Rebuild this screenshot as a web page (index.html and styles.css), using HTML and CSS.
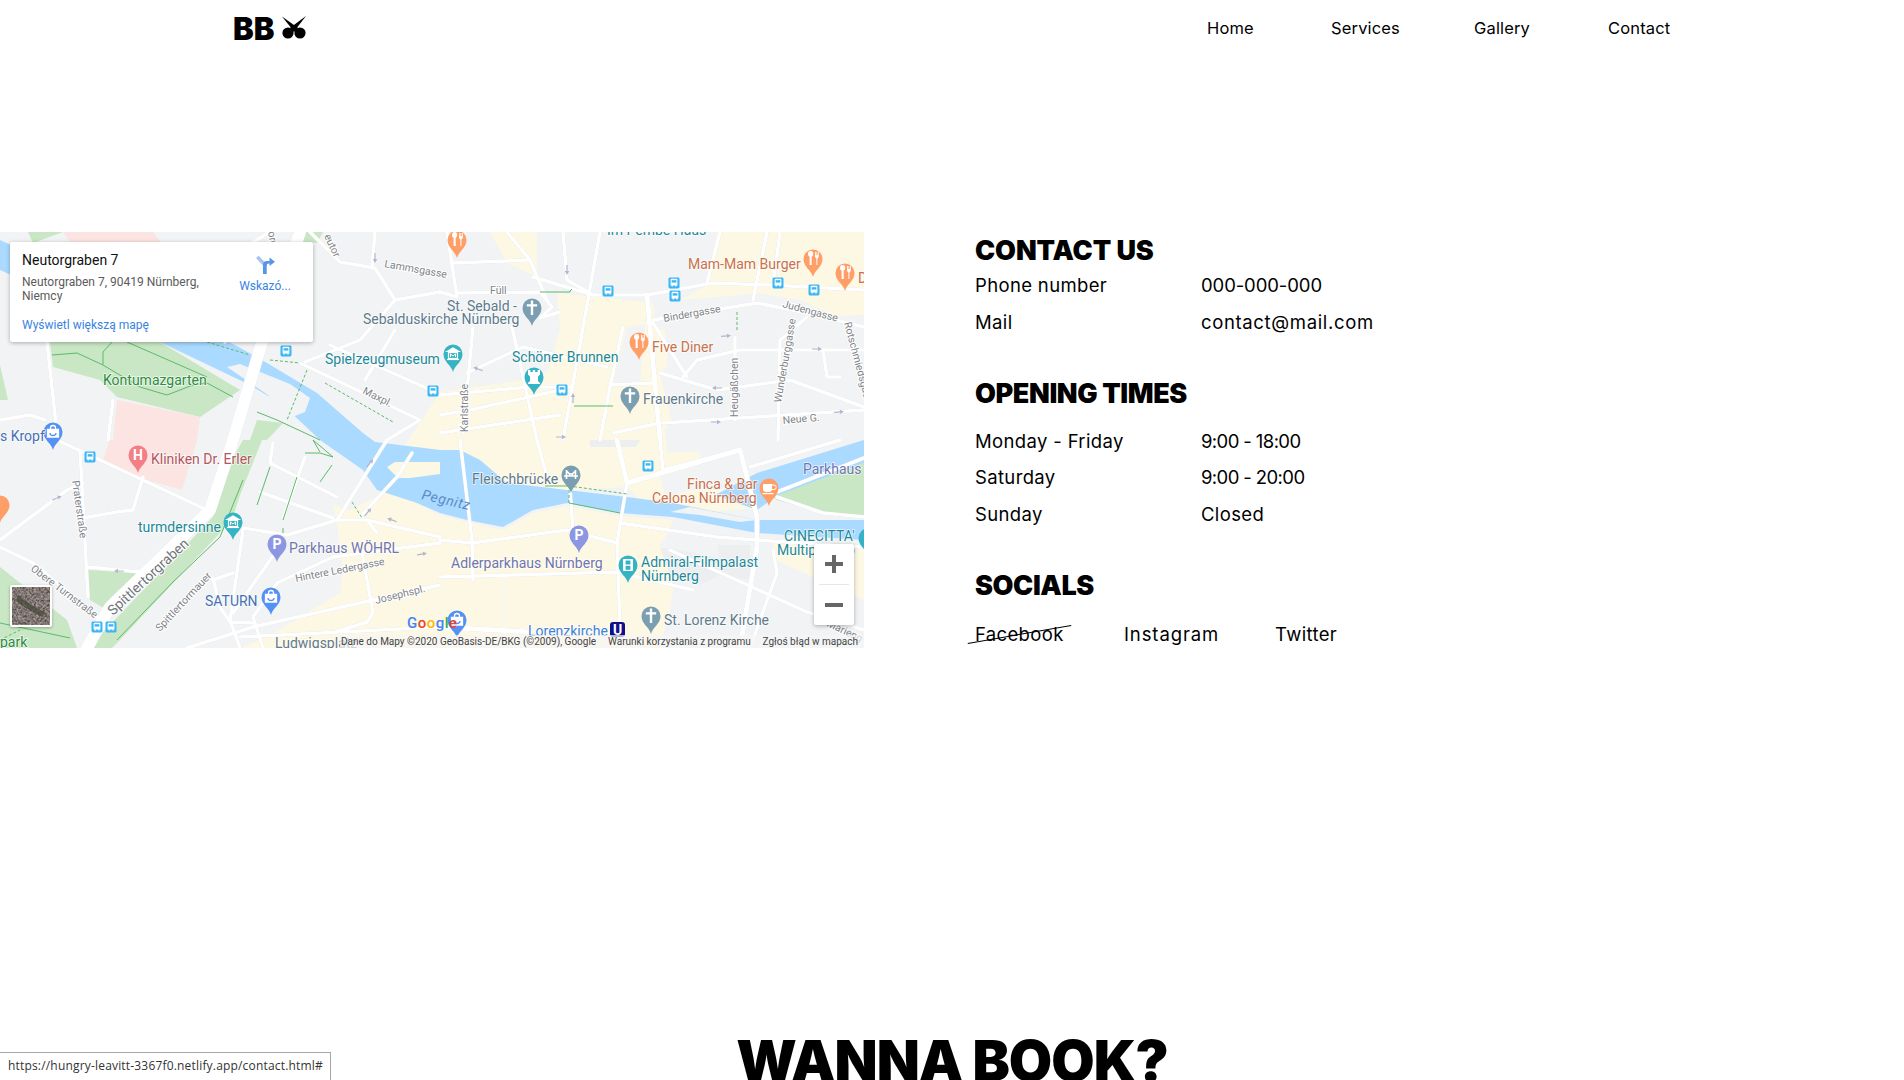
FILE: index.html
```html
<!DOCTYPE html>
<html lang="pl">
<head>
<meta charset="utf-8">
<title>Contact</title>
<link rel="stylesheet" href="styles.css">
</head>
<body>
<header class="topbar">
  <a class="logo" href="#">BB
    <svg class="logo-icon" viewBox="0 0 24 24"><path d="M0 .5 L15.5 11.5 L12 15.5 Z"/><path d="M24 0 L8.5 11.5 L12 15.5 Z"/><circle cx="6" cy="17" r="5.6"/><circle cx="18" cy="17" r="5.6"/><path d="M8 12 L12 9.5 L16 12 L12 16Z"/></svg>
  </a>
  <nav class="nav">
    <a href="#">Home</a><a href="#">Services</a><a href="#">Gallery</a><a href="#">Contact</a>
  </nav>
</header>

<main class="contact">
  <div class="map">
    <svg class="map-canvas" viewBox="0 232 864 416">
      <defs>
        <path id="pin" d="M0,18 C-1.8,11 -9.5,8 -9.5,0 A9.5,9.5 0 1 1 9.5,0 C9.5,8 1.8,11 0,18Z"/>
        <g id="g-food" fill="#fff"><path d="M-5,-5 a2.6,3 0 1 1 5.2,0 a2.6,3 0 0 1 -1.6,2.8 L-1.2,6 h-2.2 L-3.4,-2.2 a2.6,3 0 0 1 -1.6,-2.8Z"/><path d="M2,-7 h.8 v3 h.7 v-3 h.8 v3 h.7 v-3 h.8 v5 l-1.4,1.4 V6 H3.4 V-.6 L2,-2Z"/></g>
        <g id="g-cross" fill="#fff"><path d="M-1.2,-7.5 h2.4 v3.7 h4 v2.2 h-4 V7 h-2.4 V-1.6 h-4 v-2.2 h4Z"/></g>
        <g id="g-museum" fill="none" stroke="#fff" stroke-width="1.2"><path d="M-6,-2.5 L0,-6 L6,-2.5Z" fill="#fff"/><rect x="-4.5" y="-1.5" width="9" height="6"/><path d="M-2.5,3 V0 L0,2 L2.5,0 V3" stroke-width="1"/><path d="M-6,5.5 H6"/></g>
        <g id="g-shop" fill="none" stroke="#fff" stroke-width="1.3"><path d="M-5.5,-2.5 H5.5 V5 H-5.5Z" fill="#fff"/><path d="M-2.5,-2.5 V-4 a2.5,2.5 0 0 1 5,0 V-2.5"/><path d="M-3,1 a3,2.5 0 0 0 6,0" stroke="#5491f5"/></g>
        <g id="g-castle" fill="#fff"><path d="M-6,-7 h2.4 v2 h2.4 v-2 h2.4 v2 h2.4 v-2 H6 v4.4 l-2,2 V4 l2,2 v1 h-12 v-1 l2,-2 V-.6 l-2,-2Z"/></g>
        <g id="g-cafe" fill="#fff"><path d="M-6,-4 h9 v5 a3,3 0 0 1 -3,3 h-3 a3,3 0 0 1 -3,-3Z"/><path d="M3,-3 h2 a2,2 0 0 1 0,4.5 h-2" fill="none" stroke="#fff"/><rect x="-6.5" y="5" width="11" height="1.2"/></g>
        <g id="g-film" fill="#fff"><rect x="-5" y="-6" width="10" height="12" rx=".8"/><rect x="-2.4" y="-4.5" width="4.8" height="4" fill="#34b3c5"/><rect x="-2.4" y=".8" width="4.8" height="4" fill="#34b3c5"/></g>
        <g id="g-bridge" fill="none" stroke="#fff" stroke-width="1.6"><path d="M-7,1 H7 M-4.5,-5 V4 M4.5,-5 V4 M-4.5,-4 Q0,2 4.5,-4 M-1.5,-1 V1 M1.5,-1 V1"/></g>
        <g id="bus"><rect x="-5.5" y="-5.5" width="11" height="11" rx="1.4" fill="#3bb6f6"/><path d="M-3.4,-3.2 a1,1 0 0 1 1,-1 h4.8 a1,1 0 0 1 1,1 v5.6 h-.8 v1 h-1.2 v-1 h-2.6 v1 h-1.2 v-1 h-1Z" fill="#fff"/><rect x="-2.4" y="-2.8" width="4.8" height="2.4" fill="#3bb6f6"/></g>
        <path id="arrow" d="M-5,-.6 H1 V-2.2 L5,0 L1,2.2 V.6 H-5Z" fill="#b1b7ce"/>
      </defs>

      <rect class="land" x="0" y="232" width="864" height="416"/>

      <g class="cream">
        <path d="M490,232 L537,232 L537,277 L507,263Z"/>
        <path d="M557,293 L627,300 L653,303 L655,323 L627,327 L612,387 L640,385 L645,325 L665,330 L668,365 L660,375 L672,420 L665,430 L667,452 L700,452 L700,460 L660,475 L667,505 L640,500 L627,487 L567,490 L507,483 L480,460 L460,450 L440,450 L405,445 L425,415 L440,392 L523,380 L548,372 L560,328Z"/>
        <path d="M717,232 L864,232 L864,315 L835,316 L800,300 L757,293 L730,296 L680,300 L712,283 L707,277Z"/>
        <path d="M333,505 L350,510 L390,490 L420,505 L440,515 L467,522 L503,530 L533,513 L567,506 L620,516 L673,520 L667,535 L660,545 L670,550 L673,590 L670,610 L660,648 L240,648 L267,637 L340,593 L343,573 L337,523Z"/>
        <path d="M660,500 L690,490 L720,490 L757,480 L760,508 L700,512 L670,512Z" />
        <path d="M773,543 L864,548 L864,600 L820,580 L775,560Z"/>
      </g>

      <path class="water" d="M0,240 L100,285 L235,345 L267,363 L317,393 L363,433 L375,442 L440,450 L460,450 L480,460 L507,483 L567,490 L627,497 L673,503 L757,520 L864,520 L864,540 L757,533 L673,517 L620,513 L567,503 L533,510 L503,527 L467,520 L440,513 L417,503 L377,490 L363,470 L320,440 L283,405 L250,385 L160,342 L0,270Z"/>
      <path class="water" d="M715,495 L757,473 L864,440 L864,463 L775,497 L757,510Z"/>
      <path class="cream-fill" d="M387,467 L395,462 L440,462 L440,474 L410,478 L398,478Z"/>
      <path class="land" d="M227,367 L240,364 L290,384 L310,398 L305,412 L285,420 L268,395 Z"/>
      <path class="land" d="M670,512 L690,507 L757,520 L740,522 L700,515Z"/>

      <g class="park">
        <path d="M50,342 L160,342 L240,390 L200,417 L117,397 L100,380 L53,367Z"/>
        <path d="M28,232 L63,232 L33,243Z"/>
        <path d="M293,232 L323,232 L317,243 L295,242Z"/>
        <path d="M257,420 L283,423 L267,440 L250,440Z"/>
        <path d="M0,567 L67,620 L77,648 L0,648Z"/>
        <path d="M88,570 L140,573 L107,610 L90,600Z"/>
        <path d="M243,440 L262,440 L240,495 L232,520 L120,640 L112,648 L88,648 L213,517 L232,460Z"/>
        <path d="M773,497 L864,463 L864,515 L823,513 L777,500Z"/>
        <path d="M0,400 L0,365 L8,400Z"/>
      </g>
      <g class="pink">
        <path d="M63,232 L153,232 L160,242 L70,242Z"/>
        <path d="M117,400 L200,417 L197,440 L113,440Z"/>
        <path d="M110,440 L197,440 L182,490 L137,477 L103,460Z"/>
      </g>
      <g class="buildings">
        <path d="M660,547 L716,557 L720,575 L700,585 L670,575Z"/>
        <path d="M718,545 L750,545 L750,580 L720,575Z"/>
        <path d="M590,440 L640,440 L636,447 L590,447Z"/>
        <path d="M815,575 L830,578 L825,590 L812,585Z"/>
      </g>

      <g class="roads">
        <polyline class="wide" points="300,232 262,342 233,440 210,510 110,607 87,648"/>
        <polyline points="47,342 57,433"/>
        <polyline points="57,440 100,460 207,510"/>
        <polyline points="80,450 88,597"/>
        <polyline points="0,540 67,490 83,483"/>
        <polyline points="83,518 117,512 133,510 143,477"/>
        <polyline points="0,547 33,563 90,610 100,620"/>
        <polyline points="88,567 140,572"/>
        <polyline points="273,443 270,463 337,497"/>
        <polyline points="305,457 283,518"/>
        <polyline points="260,492 333,518"/>
        <polyline points="243,528 287,535 337,520 367,520 440,537"/>
        <polyline points="387,440 337,520"/>
        <polyline points="412,453 397,477 360,517"/>
        <polyline points="367,520 377,533"/>
        <polyline points="243,530 230,620 240,648"/>
        <polyline points="277,550 233,613"/>
        <polyline points="440,543 333,557 277,583 253,617 263,648"/>
        <polyline points="213,578 220,607 230,622 253,623"/>
        <polyline points="233,573 213,580"/>
        <polyline points="440,585 253,627 187,648"/>
        <polyline points="362,553 373,613 367,622 333,633"/>
        <polyline points="240,637 440,627"/>
        <polyline points="460,440 472,540 473,580"/>
        <polyline points="440,540 472,543 567,530 617,543"/>
        <polyline points="620,523 717,537 757,540 863,547"/>
        <polyline points="627,483 617,543 620,627"/>
        <polyline class="mid" points="617,440 627,483 740,450 757,517 757,547 740,648"/>
        <polyline points="440,577 617,572 693,590"/>
        <polyline points="670,550 807,612 864,630"/>
        <polyline points="773,550 777,573 750,648"/>
        <polyline class="thin" points="503,573 503,648"/>
        <polyline class="mid" points="440,627 530,632"/>
        <polyline points="660,440 663,470 740,450"/>
        <polyline points="537,440 547,477"/>
        <polyline points="570,490 573,530"/>
        <polyline points="750,467 840,440"/>
        <polyline points="777,492 864,458"/>
        <polyline points="777,497 823,513 864,517"/>
        <polyline points="507,232 530,260 547,300"/>
        <polyline points="530,260 453,263"/>
        <polyline points="447,232 457,297 440,292"/>
        <polyline points="457,293 540,292 552,307 540,318 560,312"/>
        <polyline points="533,277 593,295 647,295 713,283 770,285 864,290"/>
        <polyline points="563,232 567,280 593,295"/>
        <polyline points="600,232 563,440"/>
        <polyline class="mid" points="647,295 660,440"/>
        <polyline points="720,232 707,283"/>
        <polyline points="767,232 753,300"/>
        <polyline points="780,232 773,285"/>
        <polyline points="653,320 757,303 807,313 864,327"/>
        <polyline points="623,327 610,387 600,440"/>
        <polyline points="467,373 523,347 607,367"/>
        <polyline points="440,395 530,387 573,387"/>
        <polyline points="473,327 463,433"/>
        <polyline points="512,327 537,440"/>
        <polyline points="660,373 717,390 790,380 864,407"/>
        <polyline points="683,377 697,360 740,350 864,350"/>
        <polyline points="807,317 780,340 778,440"/>
        <polyline points="735,337 735,420"/>
        <polyline points="663,423 864,410"/>
        <polyline points="653,323 687,377"/>
        <polyline points="613,433 660,423"/>
        <polyline points="610,385 653,383"/>
        <polyline points="823,350 827,377 840,377"/>
        <polyline points="440,415 470,410 560,390"/>
        <polyline points="440,433 560,415"/>
        <polyline points="310,232 340,262 375,268 395,300 360,340 305,362"/>
        <polyline points="375,232 372,268"/>
        <polyline points="395,300 440,292"/>
        <polyline points="330,345 433,391"/>
        <polyline points="300,363 420,420 387,440"/>
        <polyline points="395,330 365,380"/>
        <polyline points="0,420 30,415 45,420"/>
        <polyline points="113,400 108,440"/>
        <polyline points="270,232 240,250 225,342"/>
      </g>

      <g class="paths">
        <polyline points="52,355 77,353 103,365 140,387 167,395 193,385 207,383 233,397"/>
        <polyline points="103,365 103,352 112,342"/>
        <polyline points="127,342 207,377"/>
        <polyline points="257,412 277,420 320,440"/>
        <polyline points="243,480 220,537 173,582 117,640"/>
        <polyline points="0,623 70,638"/>
        <polyline points="305,453 320,453 333,457 313,440 320,452"/>
        <polyline points="270,467 257,505"/>
        <polyline points="297,477 283,520"/>
        <polyline points="332,465 320,482"/>
        <polyline points="283,528 283,533"/>
        <polyline points="540,292 570,292 570,291 572,289"/>
        <polyline points="574,406 613,406"/>
        <polyline points="569,503 620,513"/>
        <polyline points="545,486 569,486"/>
        <polyline class="dash" points="207,342 250,355"/>
        <polyline class="dash" points="270,360 300,363"/>
        <polyline class="dash" points="307,370 287,420"/>
        <polyline class="dash" points="325,383 393,422"/>
        <polyline class="dash" points="352,502 362,518"/>
        <polyline class="dash" points="737,312 737,332"/>
        <polyline class="dash" points="569,486 627,494"/>
        <polyline class="dash" points="569,490 569,503"/>
        <polyline class="dash" points="0,640 20,630"/>
      </g>

      <use href="#arrow" transform="translate(567,270) rotate(90)"/>
      <use href="#arrow" transform="translate(726,336) rotate(-5)"/>
      <use href="#arrow" transform="translate(817,349)"/>
      <use href="#arrow" transform="translate(717,388) rotate(180)"/>
      <use href="#arrow" transform="translate(478,369) rotate(200)"/>
      <use href="#arrow" transform="translate(573,398) rotate(-90)"/>
      <use href="#arrow" transform="translate(839,412) rotate(-5)"/>
      <use href="#arrow" transform="translate(716,422)"/>
      <use href="#arrow" transform="translate(561,437)"/>
      <use href="#arrow" transform="translate(375,258) rotate(90)"/>
      <use href="#arrow" transform="translate(57,498) rotate(-25)"/>
      <use href="#arrow" transform="translate(119,571) rotate(180)"/>
      <use href="#arrow" transform="translate(370,463) rotate(-50)"/>
      <use href="#arrow" transform="translate(368,512) rotate(-50)"/>
      <use href="#arrow" transform="translate(392,520) rotate(-160)"/>
      <use href="#arrow" transform="translate(422,554) rotate(-10)"/>

      <g class="street">
        <text transform="translate(384,267) rotate(10)">Lammsgasse</text>
        <text x="490" y="294">Füll</text>
        <text transform="translate(664,322) rotate(-10)">Bindergasse</text>
        <text transform="translate(782,307) rotate(15)">Judengasse</text>
        <text transform="translate(844,323) rotate(75)">Rotschmiedsgasse</text>
        <text transform="translate(781,403) rotate(-80)">Wunderburggasse</text>
        <text transform="translate(738,417) rotate(-90)">Heugäßchen</text>
        <text transform="translate(783,424) rotate(-5)">Neue G.</text>
        <text transform="translate(468,432) rotate(-90)">Karlstraße</text>
        <text transform="translate(362,393) rotate(27)">Maxpl.</text>
        <text transform="translate(72,481) rotate(82)">Praterstraße</text>
        <text transform="translate(30,570) rotate(37)">Obere Turnstraße</text>
        <text class="street-big" transform="translate(113,616) rotate(-43)">Spittlertorgraben</text>
        <text transform="translate(160,632) rotate(-47)">Spittlertormauer</text>
        <text transform="translate(296,582) rotate(-11)">Hintere Ledergasse</text>
        <text transform="translate(376,604) rotate(-14)">Josephspl.</text>
        <text transform="translate(826,626) rotate(25)">Marieng</text>
        <text transform="translate(268,232) rotate(80)">org</text>
        <text transform="translate(324,236) rotate(65)">eutor</text>
      </g>

      <g class="bus-stops">
        <use href="#bus" x="286" y="351"/><use href="#bus" x="433" y="391"/><use href="#bus" x="90" y="457"/>
        <use href="#bus" x="97" y="627"/><use href="#bus" x="111" y="627"/><use href="#bus" x="608" y="291"/>
        <use href="#bus" x="674" y="283"/><use href="#bus" x="675" y="296"/><use href="#bus" x="778" y="283"/>
        <use href="#bus" x="814" y="290"/><use href="#bus" x="562" y="390"/><use href="#bus" x="648" y="466"/>
      </g>

      <g class="pins-orange">
        <use href="#pin" x="457" y="240"/><use href="#g-food" x="457" y="240"/>
        <use href="#pin" x="813" y="259"/><use href="#g-food" x="813" y="259"/>
        <use href="#pin" x="845" y="273"/><use href="#g-food" x="845" y="273"/>
        <use href="#pin" x="639" y="342"/><use href="#g-food" x="639" y="342"/>
        <use href="#pin" x="0" y="505"/>
        <use href="#pin" x="769" y="488"/><use href="#g-cafe" x="769" y="488"/>
      </g>
      <g class="pins-slate">
        <use href="#pin" x="532" y="308"/><use href="#g-cross" x="532" y="308"/>
        <use href="#pin" x="630" y="396"/><use href="#g-cross" x="630" y="396"/>
        <use href="#pin" x="651" y="616"/><use href="#g-cross" x="651" y="616"/>
        <use href="#pin" x="571" y="475"/><use href="#g-bridge" x="571" y="475"/>
      </g>
      <g class="pins-teal">
        <use href="#pin" x="453" y="354"/><use href="#g-museum" x="453" y="354"/>
        <use href="#pin" x="534" y="377"/><use href="#g-castle" x="534" y="377"/>
        <use href="#pin" x="233" y="522"/><use href="#g-museum" x="233" y="522"/>
        <use href="#pin" x="628" y="565"/><use href="#g-film" x="628" y="565"/>
        <use href="#pin" x="868" y="538"/>
      </g>
      <g class="pins-blue">
        <use href="#pin" x="53" y="432"/><use href="#g-shop" x="53" y="432"/>
        <use href="#pin" x="271" y="597"/><use href="#g-shop" x="271" y="597"/>
        <use href="#pin" x="457" y="620"/><use href="#g-shop" x="457" y="620"/>
      </g>
      <g class="pins-purple">
        <use href="#pin" x="277" y="544"/><use href="#pin" x="579" y="535"/>
      </g>
      <use class="pin-red" href="#pin" x="138" y="455"/>
      <text class="pin-letter" x="277" y="549">P</text>
      <text class="pin-letter" x="579" y="540">P</text>
      <text class="pin-letter" x="138" y="460">H</text>

      <g class="lbl">
        <text class="c-slate" x="447" y="311">St. Sebald -</text>
        <text class="c-slate" x="363" y="324">Sebalduskirche Nürnberg</text>
        <text class="c-teal" x="325" y="364">Spielzeugmuseum</text>
        <text class="c-teal" x="512" y="362">Schöner Brunnen</text>
        <text class="c-orange" x="652" y="352">Five Diner</text>
        <text class="c-orange" x="688" y="269">Mam-Mam Burger</text>
        <text class="c-orange" x="858" y="283">D</text>
        <text class="c-slate" x="643" y="404">Frauenkirche</text>
        <text class="c-green" x="103" y="385">Kontumazgarten</text>
        <text class="c-blue" x="0" y="441">s Kropf</text>
        <text class="c-red" x="151" y="464">Kliniken Dr. Erler</text>
        <text class="c-teal" x="138" y="532">turmdersinne</text>
        <text class="c-purple" x="289" y="553">Parkhaus WÖHRL</text>
        <text class="c-blue" x="205" y="606">SATURN</text>
        <text class="c-slate" x="472" y="484">Fleischbrücke</text>
        <text class="c-purple" x="451" y="568">Adlerparkhaus Nürnberg</text>
        <text class="c-teal" x="641" y="567">Admiral-Filmpalast</text>
        <text class="c-teal" x="641" y="581">Nürnberg</text>
        <text class="c-slate" x="664" y="625">St. Lorenz Kirche</text>
        <text class="c-orange" x="687" y="489">Finca &amp; Bar</text>
        <text class="c-orange" x="652" y="503">Celona Nürnberg</text>
        <text class="c-purple" x="803" y="474">Parkhaus</text>
        <text class="c-teal" x="784" y="541">CINECITTA'</text>
        <text class="c-teal" x="777" y="555">Multiplex Op</text>
        <text class="c-metro" x="528" y="636">Lorenzkirche</text>
        <text class="c-slate" x="275" y="648">Ludwigsplatz</text>
        <text class="c-green" x="0" y="647">park</text>
        <text class="c-teal" x="607" y="235">Im Pembe Haus</text>
        <text class="c-river" transform="translate(421,499) rotate(13)">Pegnitz</text>
      </g>

      <rect class="metro" x="610" y="622" width="15" height="15" rx="3"/>
      <text class="metro-u" x="617.5" y="635">U</text>

      <text class="google" x="407" y="628"><tspan class="g-b">G</tspan><tspan class="g-r">o</tspan><tspan class="g-y">o</tspan><tspan class="g-b">g</tspan><tspan class="g-g">l</tspan><tspan class="g-r">e</tspan></text>
    </svg>

    <aside class="place-card">
      <div class="place-info">
        <div class="place-name">Neutorgraben 7</div>
        <div class="place-addr">Neutorgraben 7, 90419 Nürnberg, Niemcy</div>
        <a class="place-link" href="#">Wyświetl większą mapę</a>
      </div>
      <a class="place-dir" href="#">
        <svg class="dir-icon" viewBox="0 0 19 19"><path d="M7.5 19 V11 L0 3 L2.6 .8 L10.6 9 V19Z" fill="#a6c3f1"/><path d="M7 19 V10 Q7 6 11 6 H13.5 V2.5 L19 6.8 L13.5 11 V8.5 H12.5 Q10.6 8.5 10.6 11 V19Z" fill="#5a94e8"/></svg>
        <span>Wskazó...</span>
      </a>
    </aside>

    <div class="thumb"><svg class="thumb-img" viewBox="0 0 38 38"><filter id="sat"><feTurbulence type="fractalNoise" baseFrequency="0.45" numOctaves="3" seed="7"/><feColorMatrix values="0 0 0 0 .42  0 0 0 0 .34  0 0 0 0 .34  1.6 0 0 0 -.2"/></filter><rect width="38" height="38" fill="#3d3a32"/><rect width="38" height="38" filter="url(#sat)"/><path d="M6 8 Q18 18 34 26 L30 30 Q14 22 4 14Z" fill="#46493a" opacity=".75"/></svg></div>

    <div class="zoom-ctl">
      <button class="zoom-btn" type="button"><svg viewBox="0 0 18 18"><path d="M0 7 H7 V0 H11 V7 H18 V11 H11 V18 H7 V11 H0Z"/></svg></button>
      <span class="zoom-sep"></span>
      <button class="zoom-btn" type="button"><svg viewBox="0 0 18 18"><rect x="0" y="7" width="18" height="4"/></svg></button>
    </div>

    <div class="attribution">
      <span>Dane do Mapy ©2020 GeoBasis-DE/BKG (©2009), Google</span>
      <span>Warunki korzystania z programu</span>
      <span>Zgłoś błąd w mapach</span>
    </div>
  </div>

  <section class="info">
    <h2 class="info-title info-title-first">CONTACT US</h2>
    <dl class="rows rows-first">
      <dt>Phone number</dt><dd class="phone">000-000-000</dd>
      <dt>Mail</dt><dd class="mail">contact@mail.com</dd>
    </dl>
    <h2 class="info-title info-title-next">OPENING TIMES</h2>
    <dl class="rows rows-spaced">
      <dt>Monday - Friday</dt><dd class="hours">9:00 - 18:00</dd>
      <dt>Saturday</dt><dd class="hours">9:00 - 20:00</dd>
      <dt>Sunday</dt><dd>Closed</dd>
    </dl>
    <h2 class="info-title info-title-next">SOCIALS</h2>
    <div class="socials">
      <a class="social social-struck" href="#">Facebook</a>
      <a class="social social-wide" href="#">Instagram</a>
      <a class="social" href="#">Twitter</a>
    </div>
  </section>
</main>

<section class="book">
  <h1 class="book-title">WANNA BOOK?</h1>
</section>

<div class="status-bubble">https://hungry-leavitt-3367f0.netlify.app/contact.html#</div>
</body>
</html>
```
FILE: styles.css
```css
* { box-sizing: border-box; }
html, body { margin: 0; padding: 0; height: 1080px; overflow: hidden; background: #fff; }
body { font-family: Inter, "Liberation Sans", sans-serif; color: #000; }
a { color: inherit; text-decoration: none; }

.topbar { height: 56px; display: flex; align-items: center; justify-content: space-between; padding: 0 231px 0 233px; }
.logo { display: flex; align-items: center; gap: 8px; font-weight: 900; font-size: 31px; line-height: 1; letter-spacing: 0; }
.logo-icon { width: 24px; height: 24px; fill: #000; }
.nav { display: grid; grid-template-columns: 124px 143px 134px 65px; font-size: 16.5px; font-weight: 400; letter-spacing: .15px; white-space: nowrap; }

.contact { margin-top: 176px; display: flex; height: 416px; }
.map { position: relative; width: 864px; height: 416px; overflow: hidden; flex: none; font-family: Roboto, sans-serif; }
.map-canvas { display: block; width: 864px; height: 416px; font-family: Roboto, sans-serif; }

.land { fill: #f1f3f4; }
.cream path, .cream-fill { fill: #fdf8e4; }
.water { fill: #aadaff; }
.park path { fill: #c9e7c4; }
.pink path { fill: #fbe4e2; }
.buildings path { fill: #eceef0; }
.roads { filter: drop-shadow(0 0 .6px #cfd3d8); }
.roads polyline { fill: none; stroke: #fff; stroke-width: 3.5; stroke-linejoin: round; stroke-linecap: round; }
.roads .wide { stroke-width: 12; }
.roads .mid { stroke-width: 5; }
.roads .thin { stroke-width: 1.5; }
.paths polyline { fill: none; stroke: #5cba6c; stroke-width: 1; }
.paths .dash { stroke-dasharray: 3 2; }

.street text { font-size: 10.5px; fill: #7f8489; stroke: #fff; stroke-width: 2px; paint-order: stroke; }
.street .street-big { font-size: 14px; fill: #70757a; }
.pins-orange use { fill: #ff9e67; }
.pins-slate use { fill: #7b9eb0; }
.pins-teal use { fill: #34b3c5; }
.pins-blue use { fill: #5491f5; }
.pins-purple use { fill: #8c96e3; }
.pin-red { fill: #f37e85; }
.pin-letter { font-size: 14px; font-weight: 700; fill: #fff; text-anchor: middle; }

.lbl text { font-size: 14px; stroke: #fff; stroke-width: 1.6px; stroke-opacity: .75; paint-order: stroke; }
.c-slate { fill: #5e7a8b; }
.c-teal { fill: #1c8998; }
.c-orange { fill: #c8714c; }
.c-green { fill: #2e8b43; }
.c-blue { fill: #4570b5; }
.c-red { fill: #b1575f; }
.c-purple { fill: #6f76ad; }
.c-metro { fill: #3b82dc; }
.lbl .c-river { fill: #5b8bc9; letter-spacing: .6px; stroke: none; font-style: italic; }
.metro { fill: #10108a; }
.metro-u { font-size: 14px; font-weight: 700; fill: #fff; text-anchor: middle; }

.google { font-size: 15px; font-weight: 500; letter-spacing: .5px; }
.g-b { fill: #4285f4; }
.g-r { fill: #ea4335; }
.g-y { fill: #fbbc05; }
.g-g { fill: #34a853; }

.place-card { position: absolute; left: 10px; top: 10px; width: 303px; height: 100px; background: #fff; border-radius: 2px; box-shadow: 0 1px 4px rgba(0,0,0,.3); display: flex; padding: 9px 12px 0 12px; }
.place-info { width: 198px; flex: none; font-size: 12px; line-height: 14px; color: #5b5b5b; }
.place-name { font-size: 14px; font-weight: 400; color: #111; line-height: 18px; margin-bottom: 6px; }
.place-addr { height: 28px; }
.place-link { display: block; margin-top: 15px; color: #3a84df; white-space: nowrap; }
.place-dir { display: flex; flex-direction: column; align-items: center; width: 60px; margin-left: 15px; color: #3a84df; font-size: 12px; line-height: 14px; white-space: nowrap; padding-top: 4px; gap: 5px; }
.dir-icon { width: 19px; height: 19px; display: block; }

.thumb { position: absolute; left: 10px; top: 353px; width: 42px; height: 42px; background: #fff; border-radius: 2px; padding: 2px; box-shadow: 0 1px 3px rgba(0,0,0,.3); }
.thumb-img { display: block; width: 38px; height: 38px; }

.zoom-ctl { position: absolute; left: 814px; top: 312px; width: 40px; height: 81px; background: #fff; border-radius: 2px; box-shadow: 0 1px 4px rgba(0,0,0,.3); display: flex; flex-direction: column; align-items: center; }
.zoom-btn { width: 40px; height: 40px; padding: 0; border: 0; background: none; display: flex; align-items: center; justify-content: center; }
.zoom-btn svg { width: 18px; height: 18px; fill: #666; }
.zoom-sep { width: 30px; height: 1px; background: #e6e6e6; flex: none; }

.attribution { position: absolute; right: 0; bottom: 0; width: 524px; height: 13px; padding: 0 6px 0 1px; background: rgba(245,245,245,.72); color: #444; font-size: 10px; line-height: 13px; display: flex; justify-content: space-between; white-space: nowrap; }

.info { margin-left: 111px; width: 500px; padding-top: 1px; }
.info-title { margin: 0; font-size: 27px; line-height: 36px; font-weight: 900; letter-spacing: -0.4px; }
.info-title-first { padding-top: 2px; line-height: 32px; letter-spacing: -0.1px; }
.info-title-next { margin-top: 36px; }
.rows { margin: 0; display: grid; grid-template-columns: 226px 1fr; grid-auto-rows: 36.4px; align-items: center; font-size: 18.5px; letter-spacing: .35px; }
.rows dt, .rows dd { margin: 0; }
.rows .hours { letter-spacing: -.6px; }
.rows .phone { letter-spacing: -.1px; }
.rows .mail { letter-spacing: .65px; }
.rows-first { margin-bottom: 1px; }
.rows-spaced { margin-top: 11px; }
.socials { margin-top: 12px; display: grid; grid-template-columns: 149px 151px 1fr; height: 36px; align-items: center; font-size: 18.5px; letter-spacing: .35px; }
.social { justify-self: start; }
.social-wide { letter-spacing: .9px; }
.social-struck { position: relative; }
.social-struck::after { content: ""; position: absolute; left: -8px; top: 50%; width: 105px; height: 1px; background: #000; transform: rotate(-10deg); }

.book { padding-top: 385px; text-align: center; }
.book-title { margin: 0; font-size: 56px; line-height: 1; font-weight: 900; letter-spacing: -1px; }

.status-bubble { position: fixed; left: 0; bottom: 0; height: 28px; width: 331px; background: #fff; border: 1px solid #a6a6a6; border-left: 0; border-bottom: 0; padding-left: 8px; font-family: "Open Sans", sans-serif; font-size: 12px; letter-spacing: .18px; line-height: 26px; color: #333; white-space: nowrap; }
```
